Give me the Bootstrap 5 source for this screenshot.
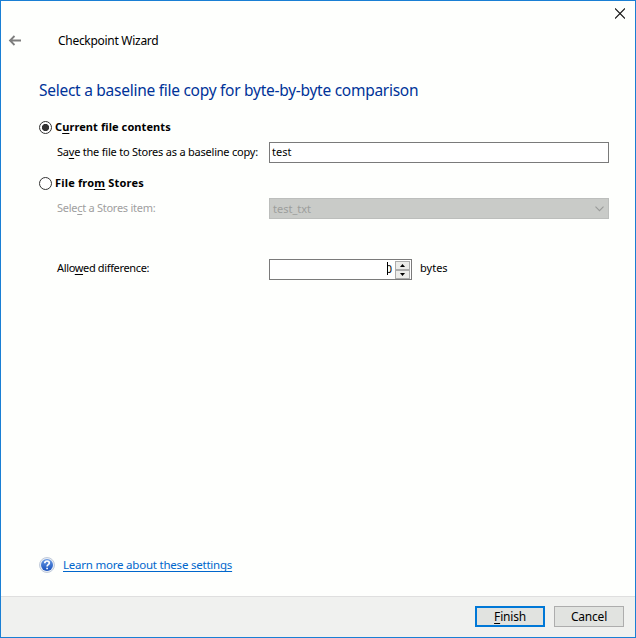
<!DOCTYPE html>
<html lang="en">
<head>
<meta charset="utf-8">
<meta name="viewport" content="width=device-width, initial-scale=1">
<title>Checkpoint Wizard</title>
<link href="https://cdn.jsdelivr.net/npm/bootstrap@5.3.0/dist/css/bootstrap.min.css" rel="stylesheet">
<style>
body{font-family:"Noto Sans","Open Sans",sans-serif;font-size:11px;line-height:16px;color:#000;background:#fefffd}
.wizard{height:638px;border:1px solid #1a7fd4}
.titlebar{height:25px;padding:7px 10px 0 0}
.close-btn,.back-btn{line-height:0}
svg{display:block;flex:none}
.head-row{height:30px;padding-left:7px}
.wiz-title{font-size:12px;margin-left:36px;letter-spacing:-.29px}
.page-title{font-size:15.5px;line-height:24px;color:#003399;margin:22px 0 0 38px;font-weight:400;letter-spacing:-.27px}
.options{margin:18px 26px 0 38px}
.opt{height:14px;gap:3px;font-weight:700}
.opt .form-check-input{width:13px;height:13px;margin:0;border:1px solid #333;background:#fff;box-shadow:none;flex:none}
.opt .form-check-input:checked{background:radial-gradient(circle,#333 0 3.3px,#fff 3.9px)}
.field{height:21px}
.opt-second{margin-top:13px}
.field-gap{margin-top:40px}
.field-label{width:230px;padding:0 0 2px 18px;flex:none;white-space:nowrap}
.box{height:21px;border:1px solid #7a7a7a;border-radius:0;background:#fff;color:#000;font-size:11px;line-height:18px;padding:0 2px}
.box-off{border-color:#bcbebc;background:#c9cbc8;color:#9c9e9c;padding:0 4px 0 3px}
.off{color:#a0a0a0}
.spin{width:143px;padding:0 1px 0 0}
.spin-steps{margin-left:3px}
.spin-btn{width:15px;height:9px;border:1px solid #acacac;background:#ececea;padding:0;line-height:0}
.caret{width:3px;height:13px;border-left:2px solid #fff;background:#000;margin:0 -2px 2px 0;z-index:1}
.zero{padding-bottom:2px}
.learn{margin:0 0 23px 38px;gap:8px;font-size:11.5px;letter-spacing:-.22px}
.learn a{color:#0066cc;text-decoration:underline;text-underline-offset:2px;text-decoration-skip-ink:none}
.foot{height:41px;border-top:1px solid #dfdfdf;background:#f0f1ef;padding:0 11px 2px 0;gap:9px}
.foot .btn{width:70px;height:21px;border:1px solid #adadad;border-radius:0;background:#e1e3e0;color:#000;font-size:12px;line-height:19px;padding:0;letter-spacing:-.2px}
.foot .btn-main{border:2px solid #0078d7;line-height:17px}
u{text-underline-offset:1.5px;text-decoration-thickness:1px;text-decoration-skip-ink:none}
.t-cur{letter-spacing:.09px}
.t-from{letter-spacing:.18px}
.t-save{letter-spacing:-.22px}
.t-sel{letter-spacing:-.27px}
.t-allow{letter-spacing:-.35px}
.field-gap .field-label,.raise{padding-bottom:3px}
</style>
</head>
<body>
<main class="wizard d-flex flex-column overflow-hidden">
  <div class="titlebar d-flex justify-content-end align-items-start">
    <button class="close-btn btn p-0 border-0" aria-label="Close"><svg width="10" height="11" viewBox="0 0 10 11"><path d="M0 .5l10 10M10 .5L0 10.500" stroke="#111" stroke-width="1.1"/></svg></button>
  </div>
  <div class="head-row d-flex align-items-center">
    <button class="back-btn btn p-0 border-0" aria-label="Back"><svg width="14" height="14" viewBox="0 0 14 14"><path d="M13 6.500H2M6.500 2l-4.500 4.500 4.500 4.500" fill="none" stroke="#7d7d7d" stroke-width="1.800"/></svg></button>
    <span class="wiz-title">Checkpoint Wizard</span>
  </div>
  <h1 class="page-title">Select a baseline file copy for byte-by-byte comparison</h1>
  <form class="options">
    <label class="opt d-flex align-items-center"><input class="form-check-input" type="radio" name="src" checked><span class="t-cur">C<u>u</u>rrent file contents</span></label>
    <div class="field d-flex align-items-center mt-2">
      <label class="field-label"><span class="t-save">Sa<u>v</u>e the file to Stores as a baseline copy:</span></label>
      <div class="box flex-grow-1">test</div>
    </div>
    <label class="opt opt-second d-flex align-items-center"><input class="form-check-input" type="radio" name="src"><span class="t-from">File fro<u>m</u> Stores</span></label>
    <div class="field d-flex align-items-center mt-2">
      <label class="field-label off"><span class="t-sel">Sele<u>c</u>t a Stores item:</span></label>
      <div class="box box-off flex-grow-1 d-flex justify-content-between align-items-center"><span>test_txt</span><svg width="9" height="6" viewBox="0 0 9 6"><path d="M.5.7l4 4 4-4" fill="none" stroke="#999b99" stroke-width="1.1"/></svg></div>
    </div>
    <div class="field field-gap d-flex align-items-center">
      <label class="field-label"><span class="t-allow">Allo<u>w</u>ed difference:</span></label>
      <div class="box spin d-flex justify-content-end align-items-center"><span class="caret"></span><span class="zero">0</span>
        <div class="spin-steps d-flex flex-column">
          <button type="button" class="spin-btn d-flex align-items-center justify-content-center" aria-label="Increase"><svg width="5" height="3"><path d="M0 3h5L2.5 0z"/></svg></button>
          <button type="button" class="spin-btn d-flex align-items-center justify-content-center" aria-label="Decrease"><svg width="5" height="3"><path d="M0 0h5L2.5 3z"/></svg></button>
        </div>
      </div>
      <span class="ms-2 raise">bytes</span>
    </div>
  </form>
  <div class="learn d-flex align-items-center mt-auto">
    <svg width="16" height="16" viewBox="0 0 16 16"><defs><linearGradient id="g" x2="0" y2="1"><stop stop-color="#6a9be4"/><stop offset="1" stop-color="#1650bd"/></linearGradient></defs><circle cx="8" cy="8" r="7.5" fill="#e8edf5" stroke="#b5c0d2" stroke-width=".8"/><circle cx="8" cy="8" r="6" fill="url(#g)"/><path d="M5.8 6.2c0-3 4.6-2.8 4.5-.2 0 1.600-2.200 1.600-2.200 3.400M8.100 10.700v1.600" fill="none" stroke="#fff" stroke-width="1.700"/></svg>
    <a href="#">Learn more about these settings</a>
  </div>
  <footer class="foot d-flex align-items-center justify-content-end">
    <button class="btn btn-main"><u>F</u>inish</button>
    <button class="btn">Cancel</button>
  </footer>
</main>
<script src="https://cdn.jsdelivr.net/npm/bootstrap@5.3.0/dist/js/bootstrap.bundle.min.js"></script>
</body>
</html>
